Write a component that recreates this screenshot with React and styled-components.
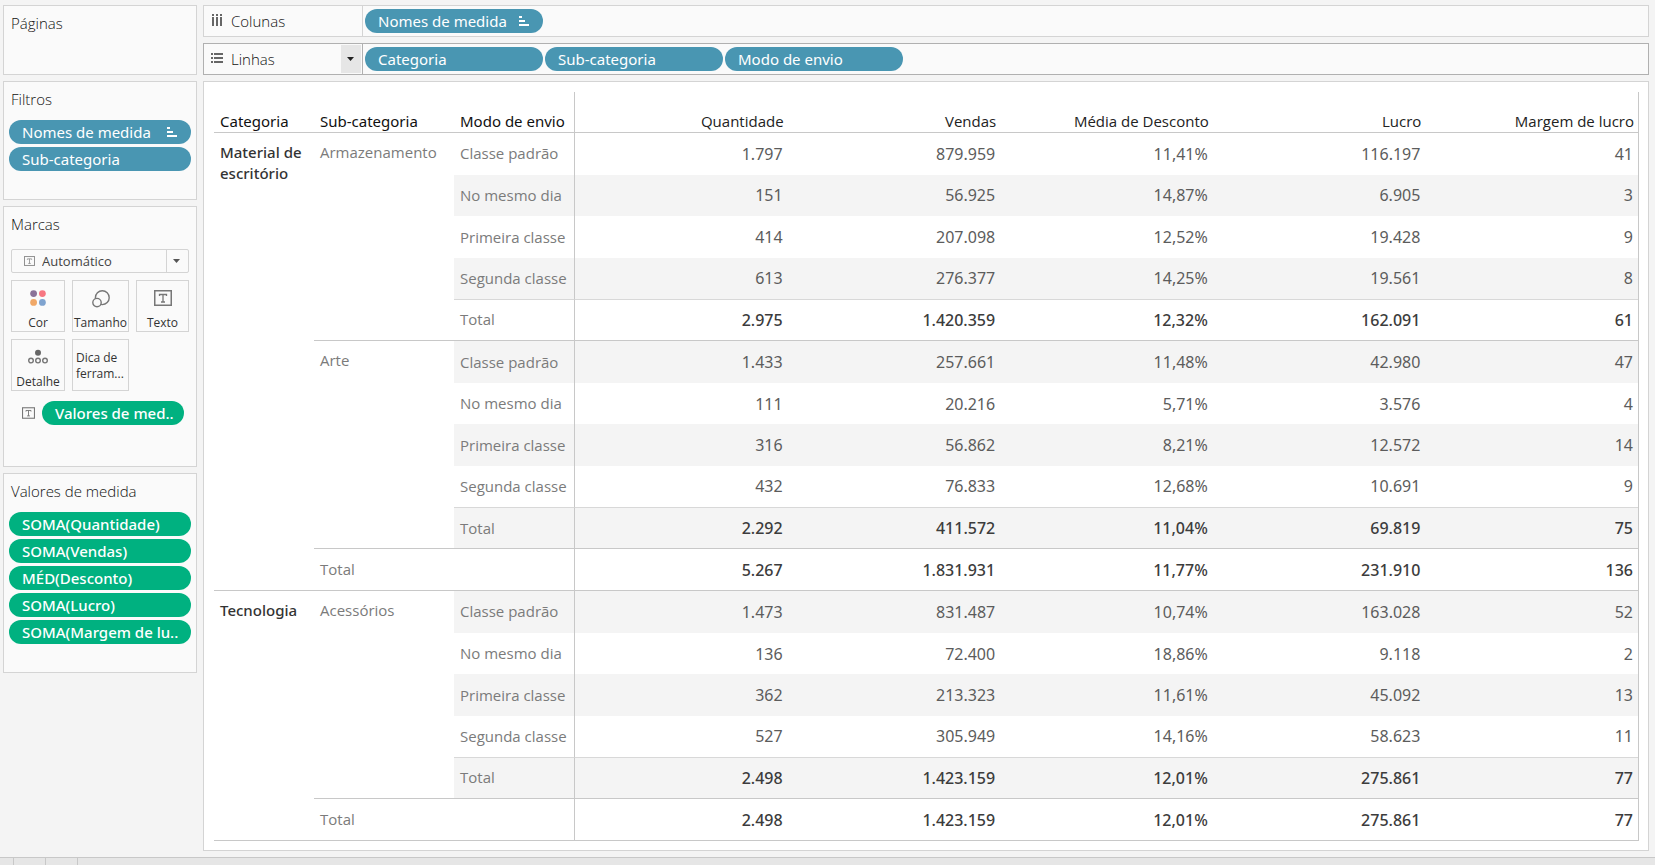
import React from "react";
import styled, { createGlobalStyle, css } from "styled-components";

const GlobalStyle = createGlobalStyle`
  * { box-sizing: border-box; }
  body {
    margin: 0;
    background: #f4f4f4;
    color: #333;
    font-family: "Open Sans", "Noto Sans", sans-serif;
    font-size: 15px;
    line-height: 20px;
  }
  button, select { font: inherit; color: inherit; }
`;

const Page = styled.div`
  display: flex;
  flex-direction: column;
  min-height: 100vh;
`;

const Workspace = styled.div`
  flex: 1;
  display: flex;
  gap: 6px;
  padding: 5px 6px 6px 3px;
`;

const Sidebar = styled.aside`
  flex: none;
  width: 194px;
  display: flex;
  flex-direction: column;
  gap: 6px;
`;

const Card = styled.section`
  min-height: ${(p) => p.$minHeight}px;
  padding: 7px 5px;
  border: 1px solid #d4d4d4;
  background: #fafafa;
`;

const CardTitle = styled.h2`
  margin: 0 0 ${(p) => (p.$loose ? 15 : 11)}px;
  padding: 0 2px;
  font-size: 15px;
  font-weight: 300;
  line-height: 20px;
  color: #111;
`;

const PillList = styled.div`
  display: flex;
  flex-direction: column;
  gap: 3px;
`;

const Pill = styled.button`
  display: flex;
  align-items: center;
  justify-content: space-between;
  height: 24px;
  width: ${(p) => p.$width || "100%"};
  min-width: 0;
  padding: 0 14px 0 13px;
  border: 0;
  border-radius: 12px;
  background: ${(p) => (p.$tone === "green" ? "#00b180" : "#4996b2")};
  color: #fff;
  font-family: "Noto Sans", sans-serif;
  font-size: 15px;
  font-weight: ${(p) => (p.$tone === "green" ? 500 : 400)};
  line-height: 24px;
  white-space: nowrap;
`;

const MarkSelect = styled.label`
  display: grid;
  grid-template-columns: 12px 12px 1fr 22px;
  align-items: center;
  height: 24px;
  margin: 0 2px 7px;
  border: 1px solid #d4d4d4;
  border-radius: 2px;
  svg, select { grid-row: 1; }
  > svg:first-of-type { grid-column: 2; }
  > svg:last-of-type { grid-column: 4; justify-self: center; }
`;

const SelectInput = styled.select`
  grid-column: 1 / -1;
  height: 22px;
  padding: 0 24px 0 30px;
  border: 0;
  background: linear-gradient(#d4d4d4, #d4d4d4) right 21px top / 1px 100% no-repeat;
  appearance: none;
  font-size: 13px;
  color: #444;
`;

const MarkGrid = styled.div`
  display: grid;
  grid-template-columns: 54px 57px 53px;
  gap: 7px;
  margin: 0 2px 10px;
`;

const MarkButton = styled.button`
  display: flex;
  flex-direction: column;
  align-items: ${(p) => (p.$text ? "flex-start" : "center")};
  justify-content: ${(p) => (p.$text ? "center" : "space-between")};
  height: 52px;
  padding: ${(p) => (p.$text ? "1px 3px 0" : "9px 0 0")};
  border: 1px solid #d4d4d4;
  background: #fafafa;
  font-size: 12px;
  line-height: 16px;
  text-align: left;
  white-space: nowrap;
`;

const MarkRow = styled.div`
  display: flex;
  align-items: center;
  gap: 7px;
  padding: 0 7px 0 13px;
`;

const Main = styled.main`
  flex: 1;
  min-width: 0;
  display: flex;
  flex-direction: column;
  gap: 6px;
`;

const Shelf = styled.section`
  display: flex;
  height: 32px;
  border: 1px solid ${(p) => (p.$active ? "#b0b0b0" : "#d4d4d4")};
  background: #fafafa;
`;

const ShelfLabel = styled.div`
  display: flex;
  align-items: center;
  gap: 8px;
  width: 159px;
  padding: 1px 1px 1px 7px;
  border-right: 1px solid ${(p) => (p.$active ? "#b0b0b0" : "#d4d4d4")};
`;

const ShelfTitle = styled.h2`
  flex: 1;
  margin: 0;
  font-size: 15px;
  font-weight: 300;
  color: #111;
`;

const ShelfMenu = styled.button`
  display: grid;
  place-items: center;
  width: 20px;
  height: 28px;
  padding: 0;
  border: 0;
  background: #e6e6e6;
`;

const ShelfPills = styled.div`
  display: flex;
  align-items: center;
  gap: 2px;
  padding: 0 2px;
`;

const Sheet = styled.section`
  flex: 1;
  display: grid;
  padding: 10px 9px 9px 10px;
  border: 1px solid #d4d4d4;
  background: #fff;
`;

const Table = styled.table`
  width: 100%;
  height: 100%;
  table-layout: fixed;
  border-collapse: separate;
  border-spacing: 0;
  border-right: 1px solid #c8c8c8;
`;

const Col = styled.col`
  width: ${(p) => p.$width}px;
`;

const HeadRow = styled.tr`
  height: 41px;
`;

const HeadCell = styled.th`
  height: 41px;
  padding: 0 ${(p) => (p.$number ? 4 : 0)}px 1px 6px;
  border-bottom: 1px solid #c8c8c8;
  ${(p) => p.$edge && "border-right: 1px solid #c8c8c8;"}
  text-align: ${(p) => (p.$number ? "right" : "left")};
  vertical-align: bottom;
  font-family: ${(p) => (p.$number ? "inherit" : '"Noto Sans", sans-serif')};
  font-weight: 400;
  color: ${(p) => (p.$number ? "#222" : "#111")};
  white-space: nowrap;
`;

const line = css`
  border-bottom: 1px solid ${(p) => (p.$line === "light" ? "#d8d8d8" : "#c8c8c8")};
`;

const GroupCell = styled.th`
  padding: 9px 6px;
  border-bottom: 1px solid #c8c8c8;
  text-align: left;
  vertical-align: top;
  font-family: ${(p) => (p.$strong ? '"Noto Sans", sans-serif' : "inherit")};
  font-weight: ${(p) => (p.$strong ? 500 : 400)};
  line-height: 21px;
  color: ${(p) => (p.$strong ? "#333" : "#7b7b7b")};
`;

const RowLabel = styled.th`
  padding: 0 0 1px 6px;
  border-right: 1px solid #c8c8c8;
  text-align: left;
  font-weight: 400;
  color: #7b7b7b;
  white-space: nowrap;
  ${(p) => p.$line && line}
`;

const Value = styled.td`
  padding: 0 5px 0 0;
  text-align: right;
  font-family: "Noto Sans", sans-serif;
  font-size: 16px;
  font-weight: ${(p) => (p.$total ? 500 : 400)};
  color: ${(p) => (p.$total ? "#3c3c3c" : "#5c5c5c")};
  ${(p) => p.$line && line}
`;

const BodyRow = styled.tr`
  height: 41px;
  ${RowLabel}, ${Value} {
    background: ${(p) => (p.$striped ? "#f4f4f4" : "#fff")};
  }
`;

const Tabs = styled.footer`
  display: flex;
  height: 8px;
  border-top: 1px solid #c8c8c8;
  background: #e6e6e6;
`;

const TabSlot = styled.div`
  width: ${(p) => p.$width}px;
  border-right: 1px solid #c8c8c8;
`;

function TextIcon({ width = 18, height = 16, color = "#777" }) {
  return (
    <svg width={width} height={height} viewBox="0 0 18 16" fill="none" stroke={color} aria-hidden="true">
      <rect x="0.75" y="0.75" width="16.5" height="14.5" strokeWidth="1.5" />
      <path d="M5.5 6V4.5h7V6M9 4.5v7.5M7 12h4" strokeWidth="1.3" />
    </svg>
  );
}

function Caret({ color = "#555" }) {
  return (
    <svg width="8" height="4" viewBox="0 0 8 4" aria-hidden="true">
      <path d="M0 0h7L3.5 4z" fill={color} />
    </svg>
  );
}

function SortIcon() {
  return (
    <svg width="10" height="12" viewBox="0 0 10 12" fill="#fff" aria-hidden="true">
      <path d="M0 1h3v2H0zM0 5h6v2H0zM0 9h10v2H0z" />
    </svg>
  );
}

function ColumnsIcon() {
  return (
    <svg width="12" height="14" viewBox="0 0 12 14" fill="#666" aria-hidden="true">
      <path d="M1 0h2v2H1zM5 0h2v2H5zM9 0h2v2H9zM1 3h2v9H1zM5 3h2v9H5zM9 3h2v9H9z" />
    </svg>
  );
}

function RowsIcon() {
  return (
    <svg width="12" height="14" viewBox="0 0 12 14" fill="#666" aria-hidden="true">
      <path d="M0 1h2v2H0zM0 5h2v2H0zM0 9h2v2H0zM3 1h9v2H3zM3 5h9v2H3zM3 9h9v2H3z" />
    </svg>
  );
}

function ColorIcon() {
  return (
    <svg width="16" height="16" viewBox="0 0 16 16" aria-hidden="true">
      <circle cx="3.6" cy="3.6" r="3.4" fill="#8a7299" />
      <circle cx="12.4" cy="3.6" r="3.4" fill="#f77782" />
      <circle cx="3.6" cy="12.4" r="3.4" fill="#f0a868" />
      <circle cx="12.4" cy="12.4" r="3.4" fill="#7fa3cf" />
    </svg>
  );
}

function SizeIcon() {
  return (
    <svg width="18" height="18" viewBox="0 0 18 18" fill="#fafafa" stroke="#777" strokeWidth="1.4" aria-hidden="true">
      <circle cx="10.3" cy="7.7" r="6.9" />
      <circle cx="5" cy="12.6" r="4.2" />
    </svg>
  );
}

function DetailIcon() {
  return (
    <svg width="20" height="15" viewBox="0 0 20 15" fill="none" stroke="#777" strokeWidth="1.4" aria-hidden="true">
      <circle cx="10" cy="3.8" r="3" fill="#666" stroke="none" />
      <circle cx="3" cy="11.6" r="2.3" />
      <circle cx="10" cy="11.6" r="2.3" />
      <circle cx="17" cy="11.6" r="2.3" />
    </svg>
  );
}

const measures = ["Quantidade", "Vendas", "Média de Desconto", "Lucro", "Margem de lucro"];

const categories = [
  {
    name: "Material de escritório",
    subs: [
      {
        name: "Armazenamento",
        rows: [
          ["Classe padrão", "1.797", "879.959", "11,41%", "116.197", "41"],
          ["No mesmo dia", "151", "56.925", "14,87%", "6.905", "3"],
          ["Primeira classe", "414", "207.098", "12,52%", "19.428", "9"],
          ["Segunda classe", "613", "276.377", "14,25%", "19.561", "8"],
          ["Total", "2.975", "1.420.359", "12,32%", "162.091", "61"],
        ],
      },
      {
        name: "Arte",
        rows: [
          ["Classe padrão", "1.433", "257.661", "11,48%", "42.980", "47"],
          ["No mesmo dia", "111", "20.216", "5,71%", "3.576", "4"],
          ["Primeira classe", "316", "56.862", "8,21%", "12.572", "14"],
          ["Segunda classe", "432", "76.833", "12,68%", "10.691", "9"],
          ["Total", "2.292", "411.572", "11,04%", "69.819", "75"],
        ],
      },
    ],
    total: ["5.267", "1.831.931", "11,77%", "231.910", "136"],
  },
  {
    name: "Tecnologia",
    subs: [
      {
        name: "Acessórios",
        rows: [
          ["Classe padrão", "1.473", "831.487", "10,74%", "163.028", "52"],
          ["No mesmo dia", "136", "72.400", "18,86%", "9.118", "2"],
          ["Primeira classe", "362", "213.323", "11,61%", "45.092", "13"],
          ["Segunda classe", "527", "305.949", "14,16%", "58.623", "11"],
          ["Total", "2.498", "1.423.159", "12,01%", "275.861", "77"],
        ],
      },
    ],
    total: ["2.498", "1.423.159", "12,01%", "275.861", "77"],
  },
];

function flatten() {
  const out = [];
  categories.forEach((cat) => {
    const span = cat.subs.reduce((n, s) => n + s.rows.length, 0) + 1;
    cat.subs.forEach((sub, si) => {
      sub.rows.forEach((row, ri) => {
        const last = ri === sub.rows.length - 1;
        out.push({
          category: si === 0 && ri === 0 ? { name: cat.name, span } : null,
          sub: ri === 0 ? { name: sub.name, span: sub.rows.length } : null,
          label: row[0],
          values: row.slice(1),
          total: last,
          line: last ? "full" : ri === sub.rows.length - 2 ? "light" : null,
        });
      });
    });
    out.push({ label: "Total", values: cat.total, total: true, grand: true, line: "full" });
  });
  return out;
}

function DataTable() {
  return (
    <Table>
      <colgroup>
        <Col $width={100} />
        <Col $width={140} />
        <Col $width={121} />
        {measures.map((m) => (
          <col key={m} />
        ))}
      </colgroup>
      <thead>
        <HeadRow>
          <HeadCell scope="col">Categoria</HeadCell>
          <HeadCell scope="col">Sub-categoria</HeadCell>
          <HeadCell scope="col" $edge>Modo de envio</HeadCell>
          {measures.map((m) => (
            <HeadCell key={m} scope="col" $number>{m}</HeadCell>
          ))}
        </HeadRow>
      </thead>
      <tbody>
        {flatten().map((r, i) => (
          <BodyRow key={i} $striped={i % 2 === 1}>
            {r.category && (
              <GroupCell scope="rowgroup" rowSpan={r.category.span} $strong>{r.category.name}</GroupCell>
            )}
            {r.sub && <GroupCell scope="rowgroup" rowSpan={r.sub.span}>{r.sub.name}</GroupCell>}
            <RowLabel scope="row" colSpan={r.grand ? 2 : 1} $line={r.line}>{r.label}</RowLabel>
            {r.values.map((v, vi) => (
              <Value key={vi} $total={r.total} $line={r.line}>{v}</Value>
            ))}
          </BodyRow>
        ))}
      </tbody>
    </Table>
  );
}

export default function App() {
  return (
    <Page>
      <GlobalStyle />
      <Workspace>
        <Sidebar>
          <Card $minHeight={70}>
            <CardTitle>Páginas</CardTitle>
          </Card>
          <Card $minHeight={119}>
            <CardTitle>Filtros</CardTitle>
            <PillList>
              <Pill>Nomes de medida<SortIcon /></Pill>
              <Pill>Sub-categoria</Pill>
            </PillList>
          </Card>
          <Card $minHeight={261}>
            <CardTitle $loose>Marcas</CardTitle>
            <MarkSelect>
              <TextIcon width={11} height={10} color="#888" />
              <SelectInput aria-label="Tipo de marca" defaultValue="auto">
                <option value="auto">Automático</option>
              </SelectInput>
              <Caret />
            </MarkSelect>
            <MarkGrid>
              <MarkButton><ColorIcon />Cor</MarkButton>
              <MarkButton><SizeIcon />Tamanho</MarkButton>
              <MarkButton><TextIcon />Texto</MarkButton>
              <MarkButton><DetailIcon />Detalhe</MarkButton>
              <MarkButton $text>Dica de<br />ferram...</MarkButton>
            </MarkGrid>
            <MarkRow>
              <TextIcon width={13} height={12} />
              <Pill $tone="green" $width="142px">Valores de med..</Pill>
            </MarkRow>
          </Card>
          <Card $minHeight={200}>
            <CardTitle>Valores de medida</CardTitle>
            <PillList>
              <Pill $tone="green">SOMA(Quantidade)</Pill>
              <Pill $tone="green">SOMA(Vendas)</Pill>
              <Pill $tone="green">MÉD(Desconto)</Pill>
              <Pill $tone="green">SOMA(Lucro)</Pill>
              <Pill $tone="green">SOMA(Margem de lu..</Pill>
            </PillList>
          </Card>
        </Sidebar>
        <Main>
          <Shelf>
            <ShelfLabel>
              <ColumnsIcon />
              <ShelfTitle>Colunas</ShelfTitle>
            </ShelfLabel>
            <ShelfPills>
              <Pill $width="178px">Nomes de medida<SortIcon /></Pill>
            </ShelfPills>
          </Shelf>
          <Shelf $active>
            <ShelfLabel $active>
              <RowsIcon />
              <ShelfTitle>Linhas</ShelfTitle>
              <ShelfMenu aria-label="Menu de linhas"><Caret color="#222" /></ShelfMenu>
            </ShelfLabel>
            <ShelfPills>
              <Pill $width="178px">Categoria</Pill>
              <Pill $width="178px">Sub-categoria</Pill>
              <Pill $width="178px">Modo de envio</Pill>
            </ShelfPills>
          </Shelf>
          <Sheet>
            <DataTable />
          </Sheet>
        </Main>
      </Workspace>
      <Tabs>
        <TabSlot $width={14} />
        <TabSlot $width={32} />
        <TabSlot $width={32} />
      </Tabs>
    </Page>
  );
}
